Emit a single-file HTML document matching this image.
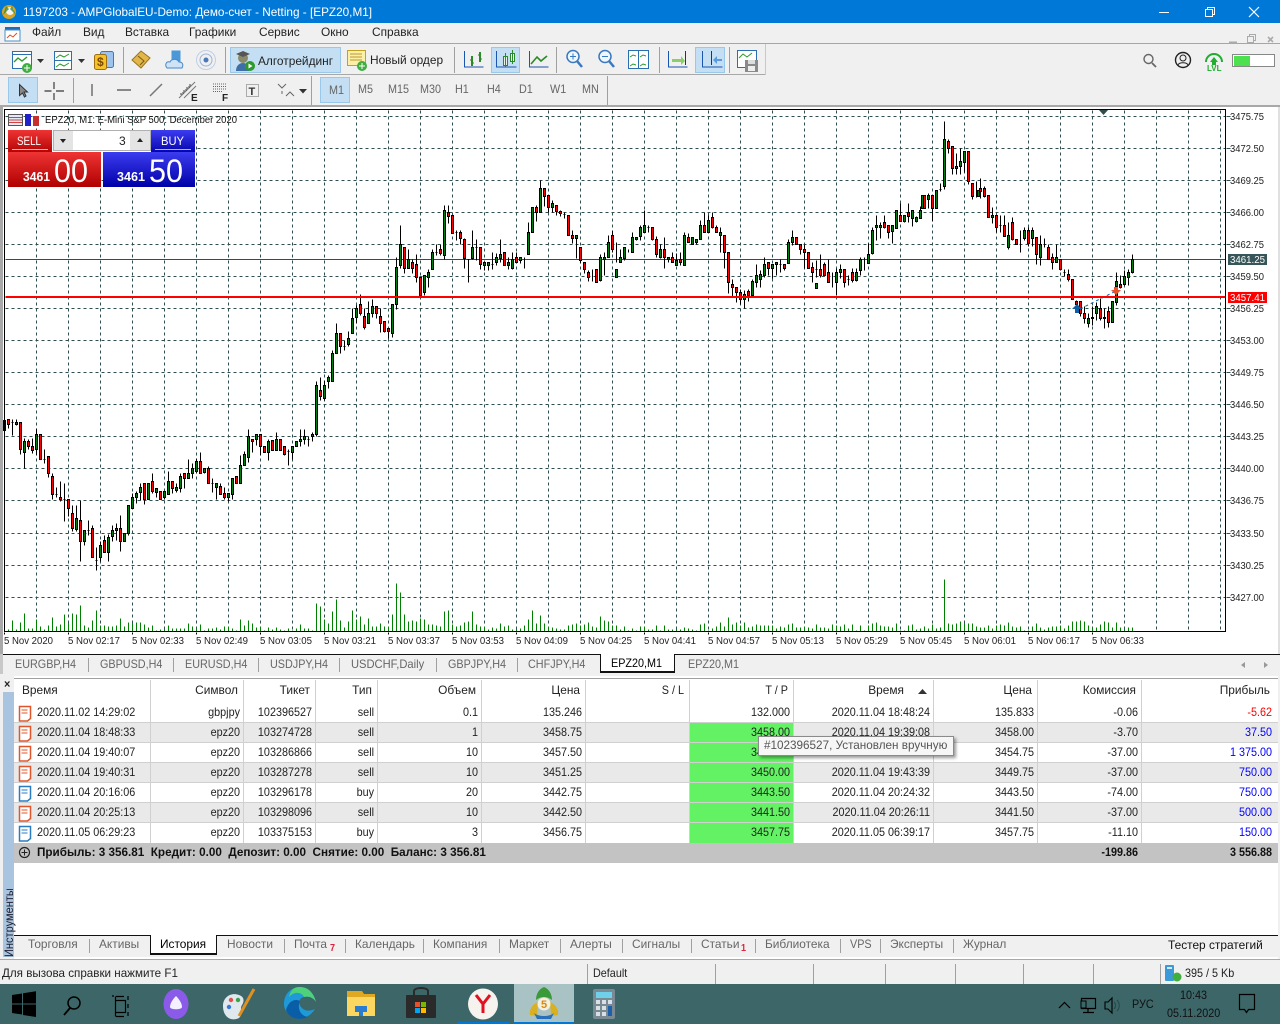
<!DOCTYPE html>
<html lang="ru"><head><meta charset="utf-8"><title>MT5</title>
<style>
html,body{margin:0;padding:0;width:1280px;height:1024px;overflow:hidden;background:#f0f0f0}
*{box-sizing:border-box}
.t{position:absolute;white-space:nowrap;transform:scaleX(.9);transform-origin:0 0;font:12px/14px "Liberation Sans","Noto Sans CJK SC",sans-serif;color:#222}
.r{position:absolute;white-space:nowrap;transform:scaleX(.9);transform-origin:100% 0;font:12px/14px "Liberation Sans",sans-serif;color:#222;text-align:right;width:140px}
.c{transform:scaleX(.99)}
.b{position:absolute}
.g{color:#666}
.hl{position:absolute;background:#c4dff3;border:1px solid #9ac8ea}
.sep{position:absolute;width:1px;background:#a0a0a0}
svg{position:absolute;left:0;top:0;overflow:visible}
svg text{font-family:"Liberation Sans",sans-serif}
</style></head><body>
<!-- title -->
<div class="b" style="left:0;top:0;width:1280px;height:23px;background:#0078d7"></div>
<div class="t" style="left:23px;top:5px;color:#fff;transform:scaleX(.98)">1197203 - AMPGlobalEU-Demo: Демо-счет - Netting - [EPZ20,M1]</div>
<!-- menu -->
<div class="b" style="left:0;top:23px;width:1280px;height:20px;background:#f0f0f0"></div>
<div class="b" style="left:0;top:43px;width:1280px;height:1px;background:#a6a6a6"></div>
<div class="t c" style="left:32px;top:25px">Файл</div>
<div class="t c" style="left:83px;top:25px">Вид</div>
<div class="t c" style="left:125px;top:25px">Вставка</div>
<div class="t c" style="left:189px;top:25px">Графики</div>
<div class="t c" style="left:259px;top:25px">Сервис</div>
<div class="t c" style="left:321px;top:25px">Окно</div>
<div class="t c" style="left:372px;top:25px">Справка</div>
<!-- toolbar bases -->
<div class="b" style="left:0;top:74px;width:765px;height:1px;background:#a8a8a8"></div>
<div class="b" style="left:765px;top:44px;width:1px;height:31px;background:#c8c8c8"></div>
<div class="b" style="left:0;top:105px;width:1280px;height:2px;background:#a8a8a8"></div>
<div class="hl" style="left:230px;top:47px;width:111px;height:26px"></div>
<div class="hl" style="left:491px;top:47px;width:29px;height:26px"></div>
<div class="hl" style="left:695px;top:47px;width:30px;height:26px"></div>
<div class="hl" style="left:8px;top:77px;width:30px;height:26px"></div>
<div class="hl" style="left:320px;top:77px;width:30px;height:26px"></div>
<div class="sep" style="left:123px;top:47px;height:26px"></div>
<div class="sep" style="left:225px;top:47px;height:26px"></div>
<div class="sep" style="left:454px;top:47px;height:26px"></div>
<div class="sep" style="left:556px;top:47px;height:26px"></div>
<div class="sep" style="left:659px;top:47px;height:26px"></div>
<div class="sep" style="left:729px;top:47px;height:26px"></div>
<div class="sep" style="left:73px;top:78px;height:25px"></div>
<div class="sep" style="left:311px;top:76px;height:29px"></div>
<div class="sep" style="left:607px;top:76px;height:29px"></div>
<div class="t c" style="left:258px;top:54px">Алготрейдинг</div>
<div class="t c" style="left:370px;top:53px">Новый ордер</div>
<div class="t g" style="left:329px;top:83px">M1</div>
<div class="t g" style="left:358px;top:82px">M5</div>
<div class="t g" style="left:388px;top:82px">M15</div>
<div class="t g" style="left:420px;top:82px">M30</div>
<div class="t g" style="left:455px;top:82px">H1</div>
<div class="t g" style="left:487px;top:82px">H4</div>
<div class="t g" style="left:519px;top:82px">D1</div>
<div class="t g" style="left:550px;top:82px">W1</div>
<div class="t g" style="left:582px;top:82px">MN</div>
<!-- chart white -->
<div class="b" style="left:0;top:107px;width:1280px;height:547px;background:#fff;border-left:3px solid #a8a8a8"></div>
<div class="b" style="left:1278px;top:107px;width:2px;height:547px;background:#e0e0e0"></div>
<!-- chart svg -->
<svg width="1280" height="1024" viewBox="0 0 1280 1024">
<g transform="translate(.5 .5)" shape-rendering="crispEdges" fill="none">
<path stroke="#2f4f4f" stroke-dasharray="3 3" d="M5 116H1225M5 148H1225M5 180H1225M5 212H1225M5 244H1225M5 276H1225M5 308H1225M5 340H1225M5 372H1225M5 404H1225M5 436H1225M5 468H1225M5 500H1225M5 533H1225M5 565H1225M5 597H1225M36 110V631M68 110V631M100 110V631M132 110V631M164 110V631M196 110V631M228 110V631M260 110V631M292 110V631M324 110V631M356 110V631M388 110V631M420 110V631M452 110V631M484 110V631M516 110V631M548 110V631M580 110V631M612 110V631M644 110V631M676 110V631M708 110V631M740 110V631M772 110V631M804 110V631M836 110V631M868 110V631M900 110V631M932 110V631M964 110V631M996 110V631M1028 110V631M1060 110V631M1092 110V631M1124 110V631M1156 110V631M1188 110V631M1220 110V631"/>
<path stroke="#2f4f4f" d="M5 259H1225"/>
<!-- volumes -->
<path stroke="#008000" d="M8 631v-2M12 631v-11M16 631v-2M20 631v-9M24 631v-18M28 631v-3M32 631v-3M36 631v-12M40 631v-5M44 631v-2M48 631v-6M52 631v-14M56 631v-5M60 631v-7M64 631v-17M68 631v-8M72 631v-18M76 631v-17M80 631v-26M84 631v-6M88 631v-4M92 631v-11M96 631v-21M100 631v-6M104 631v-6M108 631v-5M112 631v-5M116 631v-6M120 631v-13M124 631v-5M128 631v-9M132 631v-8M136 631v-9M140 631v-9M144 631v-7M148 631v-4M152 631v-6M156 631v-1M160 631v-2M164 631v-2M168 631v-6M172 631v-3M176 631v-3M180 631v-3M184 631v-3M188 631v-8M192 631v-5M196 631v-3M200 631v-7M204 631v-1M208 631v-3M212 631v-3M216 631v-4M220 631v-2M224 631v-5M228 631v-5M232 631v-3M236 631v-1M240 631v-12M244 631v-6M248 631v-11M252 631v-8M256 631v-4M260 631v-5M264 631v-1M268 631v-4M272 631v-2M276 631v-4M280 631v-2M284 631v-1M288 631v-3M292 631v-1M296 631v-3M300 631v-7M304 631v-3M308 631v-3M312 631v-1M316 631v-28M320 631v-25M324 631v-12M328 631v-8M332 631v-20M336 631v-32M340 631v-11M344 631v-4M348 631v-10M352 631v-21M356 631v-12M360 631v-15M364 631v-7M368 631v-13M372 631v-5M376 631v-5M380 631v-8M384 631v-5M388 631v-5M392 631v-17M396 631v-48M400 631v-39M404 631v-17M408 631v-10M412 631v-11M416 631v-10M420 631v-13M424 631v-12M428 631v-7M432 631v-7M436 631v-6M440 631v-5M444 631v-20M448 631v-21M452 631v-7M456 631v-5M460 631v-6M464 631v-9M468 631v-10M472 631v-20M476 631v-7M480 631v-5M484 631v-5M488 631v-2M492 631v-4M496 631v-3M500 631v-8M504 631v-5M508 631v-6M512 631v-2M516 631v-2M520 631v-3M524 631v-6M528 631v-12M532 631v-21M536 631v-8M540 631v-16M544 631v-8M548 631v-5M552 631v-4M556 631v-3M560 631v-2M564 631v-2M568 631v-6M572 631v-7M576 631v-8M580 631v-6M584 631v-7M588 631v-9M592 631v-5M596 631v-4M600 631v-15M604 631v-11M608 631v-10M612 631v-6M616 631v-6M620 631v-2M624 631v-5M628 631v-1M632 631v-3M636 631v-1M640 631v-5M644 631v-5M648 631v-2M652 631v-2M656 631v-6M660 631v-1M664 631v-6M668 631v-2M672 631v-2M676 631v-2M680 631v-2M684 631v-4M688 631v-3M692 631v-2M696 631v-1M700 631v-7M704 631v-8M708 631v-1M712 631v-3M716 631v-5M720 631v-9M724 631v-5M728 631v-14M732 631v-7M736 631v-9M740 631v-6M744 631v-9M748 631v-4M752 631v-5M756 631v-7M760 631v-6M764 631v-6M768 631v-6M772 631v-6M776 631v-3M780 631v-5M784 631v-4M788 631v-7M792 631v-8M796 631v-4M800 631v-4M804 631v-5M808 631v-4M812 631v-3M816 631v-7M820 631v-4M824 631v-4M828 631v-3M832 631v-7M836 631v-6M840 631v-5M844 631v-7M848 631v-3M852 631v-7M856 631v-1M860 631v-6M864 631v-1M868 631v-6M872 631v-8M876 631v-9M880 631v-6M884 631v-5M888 631v-5M892 631v-4M896 631v-8M900 631v-1M904 631v-1M908 631v-6M912 631v-7M916 631v-2M920 631v-3M924 631v-5M928 631v-3M932 631v-7M936 631v-3M940 631v-4M944 631v-52M948 631v-8M952 631v-7M956 631v-8M960 631v-10M964 631v-8M968 631v-8M972 631v-8M976 631v-5M980 631v-4M984 631v-4M988 631v-6M992 631v-3M996 631v-6M1000 631v-7M1004 631v-6M1008 631v-9M1012 631v-5M1016 631v-4M1020 631v-5M1024 631v-1M1028 631v-1M1032 631v-5M1036 631v-8M1040 631v-4M1044 631v-2M1048 631v-4M1052 631v-5M1056 631v-5M1060 631v-6M1064 631v-3M1068 631v-6M1072 631v-10M1076 631v-10M1080 631v-11M1084 631v-10M1088 631v-6M1092 631v-4M1096 631v-4M1100 631v-7M1104 631v-10M1108 631v-9M1112 631v-4M1116 631v-9M1120 631v-4M1124 631v-2M1128 631v-4M1132 631v-4"/>
<!-- wicks -->
<path stroke="#000" d="M4 420V430M8 419V428M12 419V435M11 422h2M16 419V425M20 422V454M24 438V468M28 439V449M32 438V453M36 428V455M40 434V459M44 449V463M43 459h2M48 456V477M52 473V499M56 487V497M55 494h2M60 481V501M64 483V521M63 499h2M68 499V516M72 505V531M76 505V531M80 500V561M84 530V545M88 520V535M87 530h2M92 525V557M96 547V570M95 560h2M100 541V561M104 535V552M108 534V561M112 525V541M116 523V540M120 515V551M124 533V541M128 505V535M132 493V508M136 491V503M140 483V500M144 483V504M148 483V499M152 473V493M156 488V497M160 491V499M164 491V499M168 471V494M172 481V493M176 483V492M180 473V492M184 473V488M188 459V478M192 463V478M196 458V473M200 452V473M204 468V473M208 466V483M212 478V492M211 483h2M216 483V499M220 483V494M224 487V499M228 493V501M232 478V499M236 476V483M240 455V483M244 451V465M248 429V462M252 439V452M256 434V445M260 434V455M264 446V452M268 439V460M272 440V450M276 432V450M280 439V450M284 446V455M288 449V465M287 451h2M292 446V459M296 441V446M300 429V446M304 429V444M308 436V446M307 439h2M312 432V441M316 381V436M320 377V400M324 380V400M328 375V388M332 350V381M336 323V353M340 333V353M344 340V350M343 346h2M348 331V346M352 308V333M356 305V323M360 294V315M364 308V329M368 301V323M372 299V317M376 306V318M380 308V332M384 321V332M388 328V338M392 304V337M396 257V309M400 225V268M404 247V273M408 249V268M412 259V273M416 254V282M420 277V295M424 275V295M428 269V287M432 249V269M436 244V255M435 252h2M440 244V255M444 205V259M448 205V223M452 215V233M456 230V240M455 232h2M460 230V244M464 238V268M468 259V282M467 259h2M472 230V259M476 239V260M475 247h2M480 247V269M484 262V270M488 262V270M492 252V269M491 264h2M496 253V265M500 239V262M504 252V265M508 257V269M512 252V269M516 252V263M515 257h2M520 257V263M524 257V268M528 222V254M532 207V232M536 205V221M540 180V212M544 188V206M548 195V212M552 200V212M556 205V215M560 210V216M564 212V218M563 214h2M568 215V235M572 230V243M576 235V258M580 247V263M584 262V273M588 270V281M592 269V281M596 269V282M600 254V281M604 252V275M608 235V257M612 230V252M611 242h2M616 242V262M620 249V262M624 247V260M628 249V252M632 232V252M636 237V240M640 225V240M644 210V232M648 225V232M647 227h2M652 227V240M656 236V257M660 244V258M664 237V268M668 257V262M672 252V262M676 253V265M680 252V265M684 232V265M688 233V242M692 237V244M696 239V244M700 220V239M704 212V232M708 215V232M712 212V228M716 225V232M720 227V252M724 235V268M728 252V293M732 279V296M736 287V302M740 289V304M744 290V308M748 289V301M752 279V295M756 264V287M760 270V287M764 257V277M768 262V275M772 264V278M776 262V275M780 259V272M779 264h2M784 264V270M788 239V263M792 230V245M796 237V244M800 244V254M804 244V268M808 252V268M812 262V282M816 260V277M815 269h2M820 254V277M824 262V276M828 259V276M832 272V287M836 268V295M840 264V278M844 269V287M848 275V285M847 279h2M852 268V282M851 276h2M856 268V281M860 257V275M864 257V270M868 243V263M872 227V254M876 215V240M880 222V238M884 215V228M888 225V238M892 225V243M896 210V228M900 203V221M904 215V222M908 203V222M912 210V226M916 216V222M920 206V218M924 195V208M928 193V208M932 195V221M936 190V208M940 183V191M939 189h2M944 121V189M948 139V153M952 146V174M956 153V174M960 148V174M964 151V172M968 151V184M972 183V199M976 181V197M980 178V198M984 186V197M988 195V217M992 207V223M996 215V232M1000 215V232M999 225h2M1004 215V236M1008 222V249M1012 217V240M1016 239V244M1020 230V252M1024 227V240M1028 227V246M1032 227V246M1036 237V264M1040 235V265M1044 238V247M1043 244h2M1048 244V259M1052 253V269M1056 244V262M1060 259V270M1064 269V276M1063 272h2M1068 269V281M1072 279V299M1076 300V306M1080 301V316M1084 306V323M1088 313V327M1092 306V325M1096 302V320M1100 298V320M1104 308V328M1108 306V327M1112 301V322M1116 272V305M1120 275V288M1124 270V285M1128 269V285M1132 254V273"/>
<!-- green bodies -->
<path stroke="#000" fill="#007f0e" d="M3 420h2V430h-2zM23 441h2V452h-2zM35 434h2V449h-2zM75 518h2V529h-2zM83 530h2V541h-2zM99 545h2V557h-2zM107 537h2V552h-2zM111 530h2V536h-2zM115 528h2V530h-2zM123 533h2V541h-2zM127 505h2V533h-2zM131 497h2V508h-2zM135 493h2V497h-2zM139 487h2V492h-2zM147 483h2V499h-2zM155 488h2V492h-2zM163 491h2V497h-2zM167 481h2V494h-2zM175 487h2V490h-2zM179 476h2V488h-2zM187 473h2V478h-2zM191 468h2V473h-2zM195 461h2V471h-2zM203 468h2V472h-2zM215 483h2V487h-2zM227 493h2V497h-2zM231 478h2V494h-2zM239 465h2V483h-2zM243 454h2V465h-2zM247 436h2V457h-2zM255 434h2V439h-2zM267 441h2V452h-2zM275 439h2V450h-2zM291 446h2V452h-2zM295 441h2V446h-2zM299 439h2V441h-2zM303 436h2V439h-2zM311 434h2V436h-2zM315 385h2V434h-2zM323 385h2V398h-2zM327 377h2V381h-2zM331 353h2V381h-2zM335 333h2V353h-2zM347 338h2V344h-2zM351 318h2V333h-2zM355 308h2V317h-2zM367 313h2V323h-2zM371 306h2V313h-2zM391 304h2V333h-2zM395 267h2V304h-2zM399 244h2V265h-2zM407 259h2V268h-2zM423 275h2V292h-2zM427 272h2V277h-2zM431 252h2V269h-2zM443 210h2V255h-2zM471 247h2V258h-2zM483 262h2V265h-2zM487 262h2V265h-2zM495 257h2V262h-2zM499 254h2V258h-2zM507 262h2V265h-2zM511 259h2V268h-2zM519 257h2V260h-2zM527 232h2V254h-2zM531 207h2V232h-2zM539 188h2V212h-2zM551 203h2V207h-2zM575 235h2V238h-2zM615 269h2V277h-2zM599 257h2V280h-2zM603 257h2V259h-2zM607 242h2V257h-2zM619 257h2V262h-2zM623 247h2V258h-2zM631 237h2V252h-2zM635 237h2V239h-2zM639 227h2V236h-2zM643 225h2V232h-2zM659 249h2V257h-2zM667 257h2V259h-2zM675 260h2V265h-2zM683 235h2V265h-2zM691 237h2V244h-2zM695 239h2V242h-2zM699 225h2V239h-2zM707 220h2V232h-2zM719 232h2V235h-2zM743 294h2V299h-2zM751 281h2V295h-2zM755 275h2V282h-2zM759 274h2V279h-2zM763 264h2V275h-2zM771 264h2V268h-2zM775 262h2V264h-2zM787 242h2V263h-2zM791 237h2V242h-2zM815 283h2V288h-2zM835 272h2V282h-2zM839 269h2V272h-2zM855 272h2V280h-2zM859 259h2V270h-2zM867 254h2V263h-2zM871 230h2V253h-2zM875 225h2V227h-2zM879 225h2V227h-2zM891 225h2V231h-2zM895 210h2V228h-2zM903 215h2V221h-2zM911 210h2V218h-2zM915 217h2V221h-2zM919 210h2V218h-2zM921 195h2V208h-2zM927 195h2V199h-2zM935 190h2V208h-2zM943 139h2V186h-2zM955 166h2V168h-2zM959 161h2V166h-2zM963 151h2V162h-2zM977 190h2V196h-2zM991 215h2V217h-2zM1007 235h2V247h-2zM1023 230h2V238h-2zM1031 230h2V238h-2zM1039 244h2V257h-2zM1055 257h2V262h-2zM1087 318h2V323h-2zM1091 317h2V318h-2zM1095 306h2V313h-2zM1111 301h2V322h-2zM1115 293h2V302h-2zM1115 281h2V286h-2zM1123 276h2V284h-2zM1127 272h2V277h-2zM1131 259h2V272h-2z"/>
<!-- red bodies -->
<path stroke="#000" fill="#ff0000" d="M7 419h2V424h-2zM15 422h2V424h-2zM19 422h2V449h-2zM27 441h2V446h-2zM31 446h2V450h-2zM39 434h2V459h-2zM47 456h2V473h-2zM51 476h2V494h-2zM59 497h2V499h-2zM67 499h2V508h-2zM71 513h2V528h-2zM79 520h2V541h-2zM91 528h2V557h-2zM103 540h2V552h-2zM119 528h2V541h-2zM143 483h2V499h-2zM151 481h2V491h-2zM159 491h2V499h-2zM171 481h2V488h-2zM183 473h2V478h-2zM199 461h2V473h-2zM207 468h2V483h-2zM219 486h2V494h-2zM223 493h2V497h-2zM235 476h2V483h-2zM251 439h2V441h-2zM259 434h2V446h-2zM263 446h2V452h-2zM271 440h2V450h-2zM279 439h2V450h-2zM283 446h2V454h-2zM319 390h2V396h-2zM339 333h2V346h-2zM359 304h2V313h-2zM363 316h2V327h-2zM375 306h2V313h-2zM379 316h2V323h-2zM383 321h2V331h-2zM387 328h2V331h-2zM403 247h2V268h-2zM411 262h2V268h-2zM415 264h2V277h-2zM419 277h2V295h-2zM439 249h2V253h-2zM447 212h2V216h-2zM451 215h2V233h-2zM459 232h2V238h-2zM463 239h2V258h-2zM479 247h2V264h-2zM503 252h2V265h-2zM515 257h2V262h-2zM535 207h2V212h-2zM543 188h2V196h-2zM547 195h2V207h-2zM555 205h2V211h-2zM559 211h2V213h-2zM567 215h2V235h-2zM571 235h2V238h-2zM579 247h2V260h-2zM583 262h2V269h-2zM587 272h2V277h-2zM595 269h2V282h-2zM611 235h2V249h-2zM651 227h2V239h-2zM655 239h2V254h-2zM663 249h2V257h-2zM671 257h2V262h-2zM679 259h2V262h-2zM687 237h2V242h-2zM703 225h2V232h-2zM711 217h2V227h-2zM715 227h2V232h-2zM723 235h2V252h-2zM727 252h2V282h-2zM731 284h2V287h-2zM735 287h2V292h-2zM739 292h2V299h-2zM747 291h2V295h-2zM767 262h2V268h-2zM783 264h2V268h-2zM795 237h2V244h-2zM799 244h2V249h-2zM803 249h2V252h-2zM807 252h2V268h-2zM811 267h2V272h-2zM819 269h2V275h-2zM823 264h2V275h-2zM827 272h2V282h-2zM843 269h2V282h-2zM851 272h2V280h-2zM883 222h2V227h-2zM887 225h2V232h-2zM899 215h2V221h-2zM907 212h2V216h-2zM923 195h2V208h-2zM931 195h2V208h-2zM947 141h2V148h-2zM951 146h2V168h-2zM967 151h2V181h-2zM971 183h2V196h-2zM979 188h2V191h-2zM983 188h2V196h-2zM987 195h2V217h-2zM995 215h2V227h-2zM1003 225h2V236h-2zM1011 222h2V239h-2zM1015 239h2V244h-2zM1027 230h2V243h-2zM1035 237h2V254h-2zM1047 247h2V259h-2zM1051 257h2V262h-2zM1059 259h2V269h-2zM1067 274h2V279h-2zM1071 279h2V299h-2zM1075 301h2V304h-2zM1079 301h2V313h-2zM1083 313h2V318h-2zM1099 308h2V318h-2zM1103 317h2V318h-2zM1107 311h2V322h-2zM1119 284h2V287h-2z"/>
<path stroke="#ff0000" stroke-width="2" d="M5 296.500H1225"/>
<path stroke="#2f4f4f" d="M1226 116h4M1226 148h4M1226 180h4M1226 212h4M1226 244h4M1226 276h4M1226 308h4M1226 340h4M1226 372h4M1226 404h4M1226 436h4M1226 468h4M1226 500h4M1226 533h4M1226 565h4M1226 597h4"/>
<path stroke="#000" d="M4 109H1225V631H4zM4 632v2M68 632v2M132 632v2M196 632v2M260 632v2M324 632v2M388 632v2M452 632v2M516 632v2M580 632v2M644 632v2M708 632v2M772 632v2M836 632v2M900 632v2M964 632v2M1028 632v2M1092 632v2"/>
</g>
<path d="M1080 309 1116 291" stroke="#0a5ea8" stroke-dasharray="3 3" fill="none"/>
<path d="M1077 304l-5 5h3v4h4v-4h3z" fill="#0a5ea8"/>
<path d="M1116 295l5-5h-3v-3h-4v3h-3z" fill="#e8502a"/>
<path d="M1099 110h9l-4.500 5z" fill="#2f4f4f"/>
<g font-size="10" fill="#222">
<text x="1230" y="120" textLength="34" lengthAdjust="spacingAndGlyphs">3475.75</text>
<text x="1230" y="152" textLength="34" lengthAdjust="spacingAndGlyphs">3472.50</text>
<text x="1230" y="184" textLength="34" lengthAdjust="spacingAndGlyphs">3469.25</text>
<text x="1230" y="216" textLength="34" lengthAdjust="spacingAndGlyphs">3466.00</text>
<text x="1230" y="248" textLength="34" lengthAdjust="spacingAndGlyphs">3462.75</text>
<text x="1230" y="280" textLength="34" lengthAdjust="spacingAndGlyphs">3459.50</text>
<text x="1230" y="312" textLength="34" lengthAdjust="spacingAndGlyphs">3456.25</text>
<text x="1230" y="344" textLength="34" lengthAdjust="spacingAndGlyphs">3453.00</text>
<text x="1230" y="376" textLength="34" lengthAdjust="spacingAndGlyphs">3449.75</text>
<text x="1230" y="408" textLength="34" lengthAdjust="spacingAndGlyphs">3446.50</text>
<text x="1230" y="440" textLength="34" lengthAdjust="spacingAndGlyphs">3443.25</text>
<text x="1230" y="472" textLength="34" lengthAdjust="spacingAndGlyphs">3440.00</text>
<text x="1230" y="504" textLength="34" lengthAdjust="spacingAndGlyphs">3436.75</text>
<text x="1230" y="537" textLength="34" lengthAdjust="spacingAndGlyphs">3433.50</text>
<text x="1230" y="569" textLength="34" lengthAdjust="spacingAndGlyphs">3430.25</text>
<text x="1230" y="601" textLength="34" lengthAdjust="spacingAndGlyphs">3427.00</text>
<text x="4" y="644" textLength="49" lengthAdjust="spacingAndGlyphs">5 Nov 2020</text>
<text x="68" y="644" textLength="52" lengthAdjust="spacingAndGlyphs">5 Nov 02:17</text>
<text x="132" y="644" textLength="52" lengthAdjust="spacingAndGlyphs">5 Nov 02:33</text>
<text x="196" y="644" textLength="52" lengthAdjust="spacingAndGlyphs">5 Nov 02:49</text>
<text x="260" y="644" textLength="52" lengthAdjust="spacingAndGlyphs">5 Nov 03:05</text>
<text x="324" y="644" textLength="52" lengthAdjust="spacingAndGlyphs">5 Nov 03:21</text>
<text x="388" y="644" textLength="52" lengthAdjust="spacingAndGlyphs">5 Nov 03:37</text>
<text x="452" y="644" textLength="52" lengthAdjust="spacingAndGlyphs">5 Nov 03:53</text>
<text x="516" y="644" textLength="52" lengthAdjust="spacingAndGlyphs">5 Nov 04:09</text>
<text x="580" y="644" textLength="52" lengthAdjust="spacingAndGlyphs">5 Nov 04:25</text>
<text x="644" y="644" textLength="52" lengthAdjust="spacingAndGlyphs">5 Nov 04:41</text>
<text x="708" y="644" textLength="52" lengthAdjust="spacingAndGlyphs">5 Nov 04:57</text>
<text x="772" y="644" textLength="52" lengthAdjust="spacingAndGlyphs">5 Nov 05:13</text>
<text x="836" y="644" textLength="52" lengthAdjust="spacingAndGlyphs">5 Nov 05:29</text>
<text x="900" y="644" textLength="52" lengthAdjust="spacingAndGlyphs">5 Nov 05:45</text>
<text x="964" y="644" textLength="52" lengthAdjust="spacingAndGlyphs">5 Nov 06:01</text>
<text x="1028" y="644" textLength="52" lengthAdjust="spacingAndGlyphs">5 Nov 06:17</text>
<text x="1092" y="644" textLength="52" lengthAdjust="spacingAndGlyphs">5 Nov 06:33</text>
<text x="45" y="123" textLength="192" lengthAdjust="spacingAndGlyphs" fill="#111">EPZ20, M1:  E-Mini S&amp;P 500: December 2020</text>
</g>
<rect x="1228" y="254" width="39" height="11" fill="#36565a"/>
<text x="1230" y="263" font-size="10" fill="#fff" textLength="35" lengthAdjust="spacingAndGlyphs">3461.25</text>
<rect x="1228" y="292" width="39" height="11" fill="#ff0000"/>
<text x="1230" y="301" font-size="10" fill="#fff" textLength="35" lengthAdjust="spacingAndGlyphs">3457.41</text>
<!-- chart header icons -->
<rect x="8.500" y="114.500" width="14" height="11" fill="#e8e8f4" stroke="#555"/><path d="M9 117.500h13M9 120h13M9 122.500h13" stroke="#c44"/>
<rect x="25" y="114" width="6" height="12" fill="#2222cc"/><rect x="33" y="116" width="6" height="10" fill="#c83030"/>
<!-- trade panel -->
<defs>
<linearGradient id="rg" x1="0" y1="0" x2="0" y2="1"><stop offset="0" stop-color="#ee3434"/><stop offset="1" stop-color="#b00000"/></linearGradient>
<linearGradient id="bg" x1="0" y1="0" x2="0" y2="1"><stop offset="0" stop-color="#3c3cf0"/><stop offset="1" stop-color="#0000a8"/></linearGradient>
</defs>
<rect x="8" y="130" width="44" height="24" fill="url(#rg)"/><path d="M12 149.500h36" stroke="#ffb0b0"/>
<rect x="151" y="130" width="44" height="24" fill="url(#bg)"/><path d="M155 149.500h36" stroke="#b0b0ff"/>
<rect x="8" y="152" width="93" height="35" fill="url(#rg)"/>
<rect x="103" y="152" width="92" height="35" fill="url(#bg)"/>
<rect x="53.500" y="130.500" width="97" height="20" fill="#fff" stroke="#b0b0b0"/>
<rect x="54" y="131" width="19" height="19" fill="#e4e4e4"/><rect x="130" y="131" width="20" height="19" fill="#e4e4e4"/>
<path d="M60 139h6l-3 4zM137 142h6l-3-4z" fill="#222"/>
<text x="119" y="145" font-size="12" fill="#222">3</text>
<text x="17" y="145" font-size="12" fill="#fff" textLength="24" lengthAdjust="spacingAndGlyphs">SELL</text>
<text x="161" y="145" font-size="12" fill="#fff" textLength="23" lengthAdjust="spacingAndGlyphs">BUY</text>
<text x="23" y="181" font-size="13" font-weight="700" fill="#fff" textLength="27" lengthAdjust="spacingAndGlyphs">3461</text>
<text x="117" y="181" font-size="13" font-weight="700" fill="#fff" textLength="28" lengthAdjust="spacingAndGlyphs">3461</text>
<text x="54" y="182" font-size="32" fill="#fff" textLength="34" lengthAdjust="spacingAndGlyphs">00</text>
<text x="149" y="182" font-size="32" fill="#fff" textLength="34" lengthAdjust="spacingAndGlyphs">50</text>
<!-- title & menu icons -->
<circle cx="9" cy="12" r="7" fill="#d9a520"/><circle cx="10" cy="11" r="4" fill="#f3f3f3"/><path d="M3 15l3-9 3 3zM16 15l-4-9-2 3z" fill="#3a8a3a" opacity=".8"/>
<rect x="5" y="27" width="15" height="3" fill="#1f6fb8"/><rect x="5" y="30" width="15" height="11" fill="#fff" stroke="#4a90c8"/><path d="M7 38l3-3 3 2 4-4" stroke="#e05020" fill="none"/>
<!-- win controls -->
<path d="M1159 12.500h10" stroke="#fff" fill="none"/>
<path d="M1205.500 9.500h7v7h-7zM1207.500 9V7.500h7v7h-2" stroke="#fff" fill="none"/>
<path d="M1249 7l10 10M1259 7l-10 10" stroke="#fff" fill="none" stroke-width="1.200"/>
<path d="M1229 42.500h8" stroke="#aaa" stroke-width="2" fill="none"/><path d="M1247.500 36.500h6v6h-6zM1249.500 36v-1.500h6v6h-2" stroke="#aaa" fill="none"/><path d="M1268 37l5 5M1273 37l-5 5" stroke="#aaa" stroke-width="1.600" fill="none"/>
<!-- toolbar row 1 icons -->
<g fill="none" stroke-width="1">
<rect x="12.500" y="51.500" width="19" height="17" fill="#fff" stroke="#2c6fae"/><path d="M12.500 54.500h19" stroke="#2c6fae"/><path d="M14 62l4-4 4 3 5-4" stroke="#2c9a2c" stroke-width="1.400"/><circle cx="27" cy="68" r="5" fill="#3fae3f"/><path d="M24 68h6M27 65v6" stroke="#fff"/>
<path d="M37 59h7l-3.500 4z" fill="#333"/>
<rect x="54.500" y="51.500" width="17" height="9" fill="#fff" stroke="#2c6fae"/><rect x="54.500" y="60.500" width="17" height="9" fill="#fff" stroke="#2c6fae"/><path d="M56 58l4-3 4 2 5-3M56 67l4-3 4 2 5-3" stroke="#2c9a2c"/>
<path d="M78 59h7l-3.500 4z" fill="#333"/>
<rect x="100.500" y="51.500" width="13" height="16" rx="2" fill="#9cc4ee" stroke="#3a78c0"/><rect x="94.500" y="54.500" width="12" height="15" rx="2" fill="#f6c22c" stroke="#a07010"/><text x="97" y="66" font-size="12" font-weight="700" fill="#7a4a00">$</text>
<path d="M132 60l9-9 9 7-9 10z" fill="#e2b64a" stroke="#9a7420"/><path d="M138 56l6 5-4 4" stroke="#7a5a10"/>
<rect x="171.500" y="50.500" width="9" height="11" fill="#4a98d8"/><path d="M167 68c-3-4 0-7 3-6 1-3 7-4 9 0 3 0 5 2 3 6z" fill="#cfe3f7" stroke="#4a88c8"/>
<circle cx="206" cy="60" r="2.500" fill="#4a78b8"/><circle cx="206" cy="60" r="6" stroke="#9cb4d8"/><circle cx="206" cy="60" r="9.500" stroke="#c0cfe6"/>
<circle cx="243" cy="58" r="5" fill="#8a8a6a"/><path d="M236 54l7-3 7 3-7 3z" fill="#555"/><path d="M236 71c0-5 3-8 7-8s6 3 6 8z" fill="#3e6fa8"/><circle cx="250" cy="66" r="5" fill="#2e9a2e"/><path d="M248.500 63.500v5l4-2.500z" fill="#fff"/>
<rect x="347.500" y="50.500" width="18" height="15" fill="#fcefa8" stroke="#c8a020"/><path d="M350 54h12M350 57h12M350 60h12" stroke="#b89a30"/><circle cx="362" cy="66" r="5" fill="#3fae3f"/><path d="M359 66h6M362 63v6" stroke="#fff"/>
<path d="M464.500 51v16h19" stroke="#1a55ae"/><path d="M472 56v10M480 52v10" stroke="#2a8a2a" stroke-width="2"/><path d="M470 60h2M472 63h2M478 55h2M480 59h2" stroke="#2a8a2a"/>
<path d="M496.500 51v16h20" stroke="#1a55ae"/><rect x="503.500" y="56.500" width="4" height="9" fill="#e8f4e8" stroke="#2a8a2a"/><rect x="510.500" y="53.500" width="4" height="8" fill="#fff" stroke="#2a8a2a"/><path d="M505.500 53v14M512.500 50v14" stroke="#2a8a2a"/>
<path d="M529.500 51v16h19" stroke="#1a55ae"/><path d="M531 64l6-7 4 4 6-5" stroke="#2a8a2a" stroke-width="1.600"/>
<circle cx="573" cy="56.500" r="6" stroke="#3a78c0" stroke-width="1.500" fill="#eef6fe"/><path d="M570 56.500h6M573 53.500v6" stroke="#3a78c0"/><path d="M577 61l5 6" stroke="#3a78c0" stroke-width="2.500"/>
<circle cx="605" cy="56.500" r="6" stroke="#3a78c0" stroke-width="1.500" fill="#eef6fe"/><path d="M602 56.500h6" stroke="#3a78c0"/><path d="M609 61l5 6" stroke="#3a78c0" stroke-width="2.500"/>
<rect x="628.500" y="50.500" width="10" height="18" fill="#fff" stroke="#2c6fae"/><rect x="638.500" y="50.500" width="10" height="18" fill="#fff" stroke="#2c6fae"/><path d="M630 57l3-2 3 1M630 66l3-2 3 1M640 57l3-2 3 1M640 66l3-2 3 1" stroke="#2a9a2a"/>
<path d="M668.500 51v16h19" stroke="#1a55ae"/><path d="M685.500 51v14" stroke="#333"/><path d="M672 59h9v-3l4 5-4 4v-3h-9z" fill="#8ccf6a"/>
<path d="M702.500 51v16h20" stroke="#1a55ae"/><path d="M711.500 51v14" stroke="#333"/><path d="M722 59h-5v-3l-4 4 4 4v-3h5z" fill="#5a9ae0"/>
<rect x="737.500" y="50.500" width="19" height="17" fill="#fff" stroke="#2c6fae"/><path d="M739 58l4-4 4 3 5-4" stroke="#2a9a2a"/><rect x="745" y="60" width="13" height="12" fill="#8a8a8a"/><rect x="748" y="60" width="7" height="4" fill="#ddd"/><rect x="748" y="66" width="7" height="5" fill="#eee"/>
<!-- top right -->
<circle cx="1148.500" cy="59" r="4.500" stroke="#666" stroke-width="1.400"/><path d="M1152 63l4 4" stroke="#666" stroke-width="1.800"/>
<circle cx="1183" cy="60" r="7.500" stroke="#222" stroke-width="1.400"/><circle cx="1183" cy="58" r="3" stroke="#222"/><path d="M1178 65c1-3 9-3 10 0" stroke="#222"/>
<path d="M1206 62a8 8 0 0 1 16 0" stroke="#1fae2f" stroke-width="2"/><path d="M1210 62l4-5 4 5h-2v3h-4v-3z" fill="#1fae2f"/>
<text x="1207" y="71" font-size="8" font-weight="700" fill="#1fae2f" stroke="none">LVL</text>
<rect x="1232.500" y="54.500" width="42" height="12" fill="#fff" stroke="#888"/><rect x="1234" y="56" width="16" height="10" fill="#4fe04f"/>
<!-- toolbar row 2 -->
<path d="M19.500 84.500v11l3-2.500 2 4 1.500-1-2-4h3.500z" fill="#888" stroke="#333"/>
<path d="M54 82v7M54 93v7M44.500 91h7M56 91h8" stroke="#555" stroke-width="1.400"/>
<path d="M92 84v12" stroke="#666" stroke-width="1.400"/>
<path d="M117 90h14" stroke="#666" stroke-width="1.500"/>
<path d="M150 96l12-12" stroke="#777" stroke-width="1.500"/>
<path d="M179 98l16-16M184 98l12-12" stroke="#777"/><path d="M180 94h3v-3h3v-3h3v-3h3" stroke="#444" stroke-dasharray="2 1"/>
<text x="191" y="101" font-size="10" font-weight="700" fill="#222" stroke="none">E</text>
<path d="M213 84h14M213 86.500h14M213 89h14M213 91.500h10" stroke="#666" stroke-dasharray="1 1"/>
<text x="222" y="101" font-size="10" font-weight="700" fill="#222" stroke="none">F</text>
<rect x="246.500" y="84.500" width="12" height="12" stroke="#666" stroke-dasharray="1 1"/>
<text x="248.500" y="95" font-size="11" font-weight="700" fill="#333" stroke="none">T</text>
<path d="M278 84l4 4 4-4M286 96l4-4 4 4M282 91v3" stroke="#666"/>
<path d="M299 89h8l-4 4.500z" fill="#333"/>
</g>
</svg>
<!-- tabs -->
<div class="b" style="left:0;top:654px;width:1280px;height:22px;background:#f0f0f0;border-top:1px solid #111"></div>
<div class="b" style="left:0;top:654px;width:3px;height:20px;background:#c8c8c8"></div>
<div class="b" style="left:600px;top:654px;width:75px;height:19px;background:#fff;border:1px solid #111;border-top:0;border-bottom:2px solid #111"></div>
<div class="t g" style="left:15px;top:657px">EURGBP,H4</div>
<div class="t g" style="left:100px;top:657px">GBPUSD,H4</div>
<div class="t g" style="left:185px;top:657px">EURUSD,H4</div>
<div class="t g" style="left:270px;top:657px">USDJPY,H4</div>
<div class="t g" style="left:351px;top:657px;transform:scaleX(.93)">USDCHF,Daily</div>
<div class="t g" style="left:448px;top:657px">GBPJPY,H4</div>
<div class="t g" style="left:528px;top:657px">CHFJPY,H4</div>
<div class="t" style="left:611px;top:656px;color:#000">EPZ20,M1</div>
<div class="t g" style="left:688px;top:657px">EPZ20,M1</div>
<div class="sep" style="left:88px;top:658px;height:14px"></div>
<div class="sep" style="left:173px;top:658px;height:14px"></div>
<div class="sep" style="left:258px;top:658px;height:14px"></div>
<div class="sep" style="left:339px;top:658px;height:14px"></div>
<div class="sep" style="left:436px;top:658px;height:14px"></div>
<div class="sep" style="left:517px;top:658px;height:14px"></div>
<svg width="1280" height="1024"><path d="M1245 662l-4 3 4 3zM1264 662l4 3-4 3z" fill="#999"/></svg>
<!-- toolbox frame -->
<div class="b" style="left:0;top:676px;width:1280px;height:283px;background:#fff"></div>
<div class="b" style="left:0;top:678px;width:1280px;height:1px;background:#a0a0a0"></div>
<div class="b" style="left:0;top:676px;width:14px;height:283px;background:#f0f0f0"></div>
<div class="b" style="left:3px;top:692px;width:11px;height:265px;background:#a9c4de"></div>
<div class="b" style="left:1278px;top:676px;width:2px;height:283px;background:#f0f0f0"></div>
<div class="t" style="left:4px;top:677px;font-weight:700;color:#222">×</div>
<div class="b" style="left:2px;top:957px;height:14px;width:70px;font:12px/14px 'Liberation Sans',sans-serif;color:#223;transform-origin:0 0;transform:rotate(-90deg) scaleX(.92);white-space:nowrap">Инструменты</div>
<!-- table bg -->
<div class="b" style="left:14px;top:723px;width:1264px;height:20px;background:#e9e9e9"></div>
<div class="b" style="left:14px;top:763px;width:1264px;height:20px;background:#e9e9e9"></div>
<div class="b" style="left:14px;top:803px;width:1264px;height:20px;background:#e9e9e9"></div>
<div class="b" style="left:689px;top:723px;width:105px;height:120px;background:#63f263"></div>
<div class="b" style="left:14px;top:843px;width:1264px;height:20px;background:#c3c3c3"></div>
<svg width="1280" height="1024"><path stroke="#d0d0d0" fill="none" d="M14 722.500H1278M14 742.500H1278M14 762.500H1278M14 782.500H1278M14 802.500H1278M14 822.500H1278M150.500 680V843M243.500 680V843M315.500 680V843M377.500 680V843M481.500 680V843M585.500 680V843M689.500 680V843M793.500 680V843M933.500 680V843M1037.500 680V843M1141.500 680V843"/>
<path d="M918 694l4.500-5 4.500 5z" fill="#333"/>
<g fill="#fff" stroke="#e0552a"><path d="M19.500 706.500h11v12l-3 2.500h-8zM19.500 726.500h11v12l-3 2.500h-8zM19.500 746.500h11v12l-3 2.500h-8zM19.500 766.500h11v12l-3 2.500h-8zM19.500 806.500h11v12l-3 2.500h-8z" stroke-width="1.500"/><path d="M21.500 710h6M21.500 713h6M21.500 730h6M21.500 733h6M21.500 750h6M21.500 753h6M21.500 770h6M21.500 773h6M21.500 810h6M21.500 813h6" fill="none"/></g>
<g fill="#fff" stroke="#2a7cc0"><path d="M19.500 786.500h11v12l-3 2.500h-8zM19.500 826.500h11v12l-3 2.500h-8z" stroke-width="1.500"/><path d="M21.500 790h6M21.500 793h6M21.500 830h6M21.500 833h6" fill="none"/></g>
<circle cx="24.500" cy="852.500" r="5" fill="none" stroke="#222" stroke-width="1.200"/><path d="M21.500 852.500h6M24.500 849.500v6" stroke="#222" fill="none"/>
</svg>
<!-- headers -->
<div class="t c" style="left:22px;top:683px">Время</div>
<div class="r c" style="left:98px;top:683px">Символ</div>
<div class="r c" style="left:170px;top:683px">Тикет</div>
<div class="r c" style="left:232px;top:683px">Тип</div>
<div class="r c" style="left:336px;top:683px">Объем</div>
<div class="r c" style="left:440px;top:683px">Цена</div>
<div class="r" style="left:544px;top:683px">S / L</div>
<div class="r" style="left:648px;top:683px">T / P</div>
<div class="r c" style="left:764px;top:683px">Время</div>
<div class="r c" style="left:892px;top:683px">Цена</div>
<div class="r c" style="left:996px;top:683px">Комиссия</div>
<div class="r c" style="left:1130px;top:683px">Прибыль</div>
<!-- rows -->
<div class="t" style="left:37px;top:705px">2020.11.02 14:29:02</div><div class="r" style="left:100px;top:705px">gbpjpy</div><div class="r" style="left:172px;top:705px">102396527</div><div class="r" style="left:234px;top:705px">sell</div><div class="r" style="left:338px;top:705px">0.1</div><div class="r" style="left:442px;top:705px">135.246</div><div class="r" style="left:650px;top:705px">132.000</div><div class="r" style="left:790px;top:705px">2020.11.04 18:48:24</div><div class="r" style="left:894px;top:705px">135.833</div><div class="r" style="left:998px;top:705px">-0.06</div><div class="r" style="left:1132px;top:705px;color:#f00">-5.62</div>
<div class="t" style="left:37px;top:725px">2020.11.04 18:48:33</div><div class="r" style="left:100px;top:725px">epz20</div><div class="r" style="left:172px;top:725px">103274728</div><div class="r" style="left:234px;top:725px">sell</div><div class="r" style="left:338px;top:725px">1</div><div class="r" style="left:442px;top:725px">3458.75</div><div class="r" style="left:650px;top:725px">3458.00</div><div class="r" style="left:790px;top:725px">2020.11.04 19:39:08</div><div class="r" style="left:894px;top:725px">3458.00</div><div class="r" style="left:998px;top:725px">-3.70</div><div class="r" style="left:1132px;top:725px;color:#00f">37.50</div>
<div class="t" style="left:37px;top:745px">2020.11.04 19:40:07</div><div class="r" style="left:100px;top:745px">epz20</div><div class="r" style="left:172px;top:745px">103286866</div><div class="r" style="left:234px;top:745px">sell</div><div class="r" style="left:338px;top:745px">10</div><div class="r" style="left:442px;top:745px">3457.50</div><div class="r" style="left:650px;top:745px">3455.00</div><div class="r" style="left:790px;top:745px">2020.11.04 19:40:20</div><div class="r" style="left:894px;top:745px">3454.75</div><div class="r" style="left:998px;top:745px">-37.00</div><div class="r" style="left:1132px;top:745px;color:#00f">1 375.00</div>
<div class="t" style="left:37px;top:765px">2020.11.04 19:40:31</div><div class="r" style="left:100px;top:765px">epz20</div><div class="r" style="left:172px;top:765px">103287278</div><div class="r" style="left:234px;top:765px">sell</div><div class="r" style="left:338px;top:765px">10</div><div class="r" style="left:442px;top:765px">3451.25</div><div class="r" style="left:650px;top:765px">3450.00</div><div class="r" style="left:790px;top:765px">2020.11.04 19:43:39</div><div class="r" style="left:894px;top:765px">3449.75</div><div class="r" style="left:998px;top:765px">-37.00</div><div class="r" style="left:1132px;top:765px;color:#00f">750.00</div>
<div class="t" style="left:37px;top:785px">2020.11.04 20:16:06</div><div class="r" style="left:100px;top:785px">epz20</div><div class="r" style="left:172px;top:785px">103296178</div><div class="r" style="left:234px;top:785px">buy</div><div class="r" style="left:338px;top:785px">20</div><div class="r" style="left:442px;top:785px">3442.75</div><div class="r" style="left:650px;top:785px">3443.50</div><div class="r" style="left:790px;top:785px">2020.11.04 20:24:32</div><div class="r" style="left:894px;top:785px">3443.50</div><div class="r" style="left:998px;top:785px">-74.00</div><div class="r" style="left:1132px;top:785px;color:#00f">750.00</div>
<div class="t" style="left:37px;top:805px">2020.11.04 20:25:13</div><div class="r" style="left:100px;top:805px">epz20</div><div class="r" style="left:172px;top:805px">103298096</div><div class="r" style="left:234px;top:805px">sell</div><div class="r" style="left:338px;top:805px">10</div><div class="r" style="left:442px;top:805px">3442.50</div><div class="r" style="left:650px;top:805px">3441.50</div><div class="r" style="left:790px;top:805px">2020.11.04 20:26:11</div><div class="r" style="left:894px;top:805px">3441.50</div><div class="r" style="left:998px;top:805px">-37.00</div><div class="r" style="left:1132px;top:805px;color:#00f">500.00</div>
<div class="t" style="left:37px;top:825px">2020.11.05 06:29:23</div><div class="r" style="left:100px;top:825px">epz20</div><div class="r" style="left:172px;top:825px">103375153</div><div class="r" style="left:234px;top:825px">buy</div><div class="r" style="left:338px;top:825px">3</div><div class="r" style="left:442px;top:825px">3456.75</div><div class="r" style="left:650px;top:825px">3457.75</div><div class="r" style="left:790px;top:825px">2020.11.05 06:39:17</div><div class="r" style="left:894px;top:825px">3457.75</div><div class="r" style="left:998px;top:825px">-11.10</div><div class="r" style="left:1132px;top:825px;color:#00f">150.00</div>
<div class="t" style="left:37px;top:845px;font-weight:700;color:#111;transform:scaleX(.975)">Прибыль: 3 356.81&nbsp; Кредит: 0.00&nbsp; Депозит: 0.00&nbsp; Снятие: 0.00&nbsp; Баланс: 3 356.81</div>
<div class="r" style="left:998px;top:845px;font-weight:700;color:#111">-199.86</div>
<div class="r" style="left:1132px;top:845px;font-weight:700;color:#111">3 556.88</div>
<!-- tooltip -->
<div class="b" style="left:758px;top:736px;width:196px;height:20px;background:#f6f6f6;border:1px solid #8a8a8a;box-shadow:2px 2px 3px rgba(0,0,0,.4)"></div>
<div class="t g" style="left:764px;top:738px;color:#555;transform:scaleX(.975)">#102396527, Установлен вручную</div>
<!-- bottom tabs -->
<div class="b" style="left:14px;top:935px;width:1264px;height:22px;background:#f0f0f0;border-top:1px solid #111"></div>
<div class="b" style="left:150px;top:935px;width:67px;height:20px;background:#fff;border:1px solid #111;border-top:0;border-bottom:2px solid #111"></div>
<div class="t g c" style="left:28px;top:937px">Торговля</div>
<div class="t g c" style="left:99px;top:937px">Активы</div>
<div class="t c" style="left:160px;top:937px;color:#000">История</div>
<div class="t g c" style="left:227px;top:937px">Новости</div>
<div class="t g c" style="left:294px;top:937px">Почта</div>
<div class="t" style="left:330px;top:942px;color:#e0203c;font-size:10px;font-weight:700">7</div>
<div class="t g c" style="left:355px;top:937px">Календарь</div>
<div class="t g c" style="left:433px;top:937px">Компания</div>
<div class="t g c" style="left:509px;top:937px">Маркет</div>
<div class="t g c" style="left:570px;top:937px">Алерты</div>
<div class="t g c" style="left:632px;top:937px">Сигналы</div>
<div class="t g c" style="left:701px;top:937px">Статьи</div>
<div class="t" style="left:741px;top:942px;color:#e0203c;font-size:10px;font-weight:700">1</div>
<div class="t g c" style="left:765px;top:937px">Библиотека</div>
<div class="t g" style="left:850px;top:937px">VPS</div>
<div class="t g c" style="left:890px;top:937px">Эксперты</div>
<div class="t g c" style="left:963px;top:937px">Журнал</div>
<div class="t c" style="left:1168px;top:938px;color:#111">Тестер стратегий</div>
<div class="sep" style="left:89px;top:939px;height:14px"></div>
<div class="sep" style="left:284px;top:939px;height:14px"></div>
<div class="sep" style="left:345px;top:939px;height:14px"></div>
<div class="sep" style="left:423px;top:939px;height:14px"></div>
<div class="sep" style="left:499px;top:939px;height:14px"></div>
<div class="sep" style="left:560px;top:939px;height:14px"></div>
<div class="sep" style="left:622px;top:939px;height:14px"></div>
<div class="sep" style="left:691px;top:939px;height:14px"></div>
<div class="sep" style="left:755px;top:939px;height:14px"></div>
<div class="sep" style="left:840px;top:939px;height:14px"></div>
<div class="sep" style="left:880px;top:939px;height:14px"></div>
<div class="sep" style="left:953px;top:939px;height:14px"></div>
<!-- status -->
<div class="b" style="left:0;top:959px;width:1280px;height:1px;background:#a8a8a8"></div>
<div class="b" style="left:0;top:960px;width:1280px;height:24px;background:#f0f0f0"></div>
<div class="t" style="left:2px;top:966px;transform:scaleX(.97)">Для вызова справки нажмите F1</div>
<div class="t" style="left:593px;top:966px">Default</div>
<div class="t" style="left:1185px;top:966px">395 / 5 Kb</div>
<div class="sep" style="left:587px;top:964px;height:20px"></div>
<div class="sep" style="left:715px;top:964px;height:20px"></div>
<div class="sep" style="left:813px;top:964px;height:20px"></div>
<div class="sep" style="left:885px;top:964px;height:20px"></div>
<div class="sep" style="left:955px;top:964px;height:20px"></div>
<div class="sep" style="left:1023px;top:964px;height:20px"></div>
<div class="sep" style="left:1093px;top:964px;height:20px"></div>
<div class="sep" style="left:1160px;top:964px;height:20px"></div>
<!-- taskbar -->
<div class="b" style="left:0;top:984px;width:1280px;height:40px;background:#3c6668"></div>
<div class="b" style="left:514px;top:984px;width:60px;height:40px;background:#a9c2c4"></div>
<div class="b" style="left:457px;top:1022px;width:52px;height:2px;background:#0078d7"></div>
<div class="b" style="left:514px;top:1022px;width:60px;height:2px;background:#0078d7"></div>
<svg width="1280" height="1024">
<rect x="1165" y="965" width="9" height="16" rx="1" fill="#3a9ad8"/><rect x="1167" y="967" width="5" height="2" fill="#cfe8fa"/><circle cx="1177" cy="977" r="4.500" fill="#3fae3f"/>
<path d="M12 995l10-1.500v10H12zM23 993.300l13-2v12.200H23zM12 1004.500h10v10L12 1013zM23 1004.500h13V1017l-13-2z" fill="#000"/>
<circle cx="74" cy="1003" r="6" fill="none" stroke="#000" stroke-width="1.500"/><path d="M70 1008l-6 7" stroke="#000" stroke-width="1.800"/>
<path d="M115.500 996.500v20M124 996.500h-8M124 1016.500h-8M116 1000.500h9.500v12H116M128 996v4M128 1004v4M128 1012v4M112 996h2" stroke="#000" fill="none" stroke-width="1.200"/>
<ellipse cx="176" cy="1004" rx="12.500" ry="15" fill="#8a5be8"/><path d="M176 996c-4 4-6 8-6 11 0 3 12 3 12 0 0-3-2-7-6-11z" fill="#f4f0ff"/>
<path d="M223 1006c0-9 8-14 16-11 6 2 5 7 3 10-3 5 2 8-3 13-8 4-16-1-16-12z" fill="#dfe8ec"/><circle cx="231" cy="1000" r="2.200" fill="#e05050"/><circle cx="238" cy="1000" r="2.200" fill="#3aa04a"/><circle cx="229" cy="1007" r="2.200" fill="#3a78d8"/><path d="M254 989l-15 27" stroke="#e09020" stroke-width="3"/>
<path d="M284 1004c0-11 8-17 16-17 9 0 14 7 16 15-3-5-8-6-12-5-5 1-6 6-3 10 4 5 10 4 14 2-3 5-8 9-15 9-9 0-16-6-16-14z" fill="#1f9ad8"/><path d="M316 1002c-3-5-8-6-12-5-2-5-10-6-15 0 2-9 7-10 11-10 9 0 14 7 16 15z" fill="#4fd07a"/><path d="M286 1010c2-8 8-12 14-9-3 7 0 15 8 16-12 5-20-1-22-7z" fill="#0a5ea8"/>
<path d="M347 991h15l2 3h11v3h-28z" fill="#e0a820"/><rect x="347" y="997" width="28" height="19" fill="#fbd660"/><path d="M355 1006h12v6h-4v4h-4v-4h-4z" fill="#2a7cd0"/>
<rect x="406" y="995" width="30" height="23" rx="1" fill="#2a2a2a"/><path d="M414 995v-4c0-4 14-4 14 0v4" fill="none" stroke="#2a2a2a" stroke-width="2"/><rect x="415" y="1002" width="5" height="5" fill="#e8502a"/><rect x="421" y="1002" width="5" height="5" fill="#7ab800"/><rect x="415" y="1008" width="5" height="5" fill="#00a4ef"/><rect x="421" y="1008" width="5" height="5" fill="#ffb900"/>
<ellipse cx="483" cy="1004" rx="15" ry="15.500" fill="#f6f2ee"/><path d="M476 995l7 9v9M490 995l-7 9" stroke="#e01020" stroke-width="3" fill="none"/>
<path d="M530 1015c-1-6 3-11 8-13l-1 14zM558 1015c1-6-3-11-8-13l1 14z" fill="#d8b020"/><path d="M536 1000c0-6 3-11 8-13 5 2 8 7 8 13-5-4-11-4-16 0z" fill="#3a9a3a"/><path d="M534 1013c5 4 15 4 20 0l-3 6h-14z" fill="#2a70b8"/><circle cx="544" cy="1004" r="6.500" fill="#f4f0e0"/>
<text x="541" y="1008" font-size="11" font-weight="700" fill="#d88a10">5</text>
<rect x="593" y="989" width="22" height="30" rx="2" fill="#7a8a94"/><rect x="596" y="992" width="16" height="6" fill="#6fd0ea"/><g fill="#d8e0e4"><rect x="596" y="1000" width="4" height="4"/><rect x="602" y="1000" width="4" height="4"/><rect x="608" y="1000" width="4" height="4"/><rect x="596" y="1006" width="4" height="4"/><rect x="602" y="1006" width="4" height="4"/><rect x="596" y="1012" width="4" height="4"/><rect x="602" y="1012" width="4" height="4"/></g><rect x="608" y="1006" width="4" height="10" fill="#1f5fa8"/>
<path d="M1059 1008l5.500-5.500 5.500 5.500" fill="none" stroke="#000" stroke-width="1.200"/>
<path d="M1081.500 998.500h14v10h-14zM1088 1008.500v4M1083 1012.500h11" fill="none" stroke="#000" stroke-width="1.200"/><rect x="1081" y="1001" width="5" height="7" fill="#3c6668" stroke="#000"/>
<path d="M1105 1002h3l4-4v15l-4-4h-3z" fill="none" stroke="#000" stroke-width="1.100"/><path d="M1114 1002c2 2 2 5 0 7M1117 1000c3 3 3 8 0 11" fill="none" stroke="#26484a"/>
<path d="M1239.500 994.500h15v15h-6l-2 3-2-3h-5z" fill="none" stroke="#000" stroke-width="1.200"/>
</svg>
<div class="t" style="left:1132px;top:997px;color:#111">РУС</div>
<div class="t" style="left:1180px;top:988px;color:#111">10:43</div>
<div class="t" style="left:1167px;top:1006px;color:#111">05.11.2020</div>
</body></html>
